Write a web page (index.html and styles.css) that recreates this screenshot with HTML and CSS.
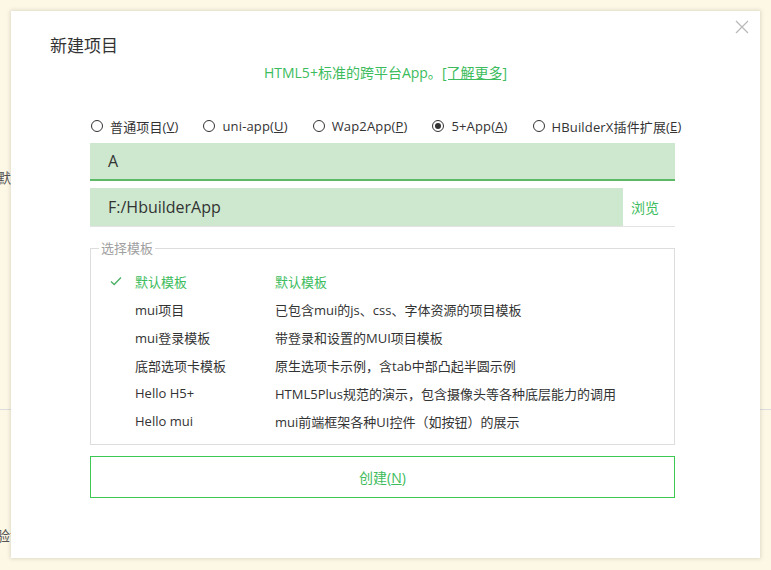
FILE: index.html
```html
<!DOCTYPE html>
<html lang="zh-CN">
<head>
<meta charset="utf-8">
<title>新建项目</title>
<link rel="stylesheet" href="styles.css">
</head>
<body>
<div class="page">
  <div class="bg-text bg-text-1">默认</div>
  <div class="bg-rule"></div>
  <div class="bg-text bg-text-2">验证</div>
</div>

<div class="dialog">
  <svg class="close" width="14" height="14" viewBox="0 0 14 14"><path d="M1 1L13 13M13 1L1 13" stroke="#b8b8b8" stroke-width="1.2" fill="none"/></svg>
  <h1 class="title">新建项目</h1>
  <p class="subtitle">HTML5+标准的跨平台App。<a class="more">[了解更多]</a></p>

  <div class="content">
    <div class="radios">
      <label class="radio"><span class="dot"></span>普通项目(<u>V</u>)</label>
      <label class="radio"><span class="dot"></span>uni-app(<u>U</u>)</label>
      <label class="radio"><span class="dot"></span>Wap2App(<u>P</u>)</label>
      <label class="radio checked"><span class="dot"></span>5+App(<u>A</u>)</label>
      <label class="radio"><span class="dot"></span>HBuilderX插件扩展(<u>E</u>)</label>
    </div>

    <div class="field field-name">A</div>
    <div class="field-row">
      <div class="field field-path">F:/HbuilderApp</div>
      <div class="browse">浏览</div>
    </div>

    <fieldset class="templates">
      <legend>选择模板</legend>
      <div class="tpl active"><span class="check"><svg width="12" height="10" viewBox="0 0 12 10"><path d="M1 5.5L4.2 8.5L11 1.5" stroke="#4caf63" stroke-width="1.3" fill="none"/></svg></span><span class="name">默认模板</span><span class="desc">默认模板</span></div>
      <div class="tpl"><span class="check"></span><span class="name">mui项目</span><span class="desc">已包含mui的js、css、字体资源的项目模板</span></div>
      <div class="tpl"><span class="check"></span><span class="name">mui登录模板</span><span class="desc">带登录和设置的MUI项目模板</span></div>
      <div class="tpl"><span class="check"></span><span class="name">底部选项卡模板</span><span class="desc">原生选项卡示例，含tab中部凸起半圆示例</span></div>
      <div class="tpl"><span class="check"></span><span class="name">Hello H5+</span><span class="desc">HTML5Plus规范的演示，包含摄像头等各种底层能力的调用</span></div>
      <div class="tpl"><span class="check"></span><span class="name">Hello mui</span><span class="desc">mui前端框架各种UI控件（如按钮）的展示</span></div>
    </fieldset>

    <button class="create">创建(<u>N</u>)</button>
  </div>
</div>
</body>
</html>
```

FILE: styles.css
```css
html, body {
  margin: 0;
  padding: 0;
}
body {
  width: 771px;
  height: 570px;
  overflow: hidden;
  background: #fdf7e5;
  font-family: "Open Sans", "Noto Sans CJK SC", sans-serif;
  color: #333;
  position: relative;
}
.page {
  height: 570px;
  display: flex;
  flex-direction: column;
}
.bg-text {
  font-size: 14px;
  color: #555;
  margin-left: -3px;
  line-height: 20px;
}
.bg-text-1 { margin-top: 168px; }
.bg-rule {
  margin-top: 221px;
  height: 1px;
  background: #ddd;
}
.bg-text-2 { margin-top: 116px; margin-left: -4px; }

.dialog {
  position: absolute;
  left: 11px;
  top: 11px;
  width: 749px;
  height: 547px;
  box-sizing: border-box;
  background: #fff;
  box-shadow: 0 0 4px 1px rgba(0,0,0,0.12);
  padding-top: 23px;
}
.close {
  position: absolute;
  right: 11px;
  top: 9px;
}
.title {
  margin: 0 0 0 39px;
  font-size: 17px;
  line-height: 24px;
  font-weight: normal;
  color: #333;
}
.subtitle {
  margin: 5px 0 0;
  text-align: center;
  font-size: 14px;
  line-height: 20px;
  color: #3cbc5c;
}
.more {
  text-decoration: underline;
}
.content {
  width: 585px;
  margin: 0 0 0 79px;
}
.radios {
  margin-top: 33px;
  display: flex;
  align-items: center;
  gap: 25px;
  height: 20px;
  font-size: 13px;
  padding-left: 1px;
}
.radio {
  display: flex;
  align-items: center;
  white-space: nowrap;
  letter-spacing: 0.15px;
}
.dot {
  width: 10px;
  height: 10px;
  border: 1px solid #333;
  border-radius: 50%;
  margin-right: 7px;
  display: flex;
  align-items: center;
  justify-content: center;
}
.checked .dot::after {
  content: "";
  width: 6px;
  height: 6px;
  border-radius: 50%;
  background: #333;
}
.field {
  background: #cde8cf;
  box-sizing: border-box;
  padding-left: 18px;
  font-size: 16px;
  display: flex;
  align-items: center;
}
.field-name {
  margin-top: 7px;
  height: 38px;
  border-bottom: 2px solid #5cb966;
}
.field-row {
  margin-top: 7px;
  height: 39px;
  display: flex;
  border-bottom: 1px solid #e3e3e3;
  box-sizing: border-box;
}
.field-path {
  flex: 1;
  height: 38px;
}
.browse {
  width: 52px;
  box-sizing: border-box;
  padding-left: 8px;
  font-size: 14px;
  color: #3cbc5c;
  display: flex;
  align-items: center;
}
.templates {
  margin: 14px 0 0;
  border: 1px solid #ddd;
  padding: 12px 0 12px 8px;
  height: 204px;
  box-sizing: border-box;
  font-size: 13px;
}
.templates legend {
  padding: 0 2px;
  color: #a0a0a0;
  font-size: 13px;
  line-height: 14px;
}
.tpl {
  display: flex;
  align-items: center;
  height: 28px;
  margin-left: -8px;
}
.check {
  width: 44px;
  box-sizing: border-box;
  padding-left: 19px;
  display: flex;
  align-items: center;
}
.name {
  width: 140px;
}
.active {
  color: #3cbc5c;
}
.create {
  display: block;
  margin-top: 11px;
  width: 585px;
  height: 42px;
  background: #fff;
  border: 1px solid #3dc853;
  color: #3cbc5c;
  font-family: inherit;
  font-size: 14px;
  padding: 0;
}
```
